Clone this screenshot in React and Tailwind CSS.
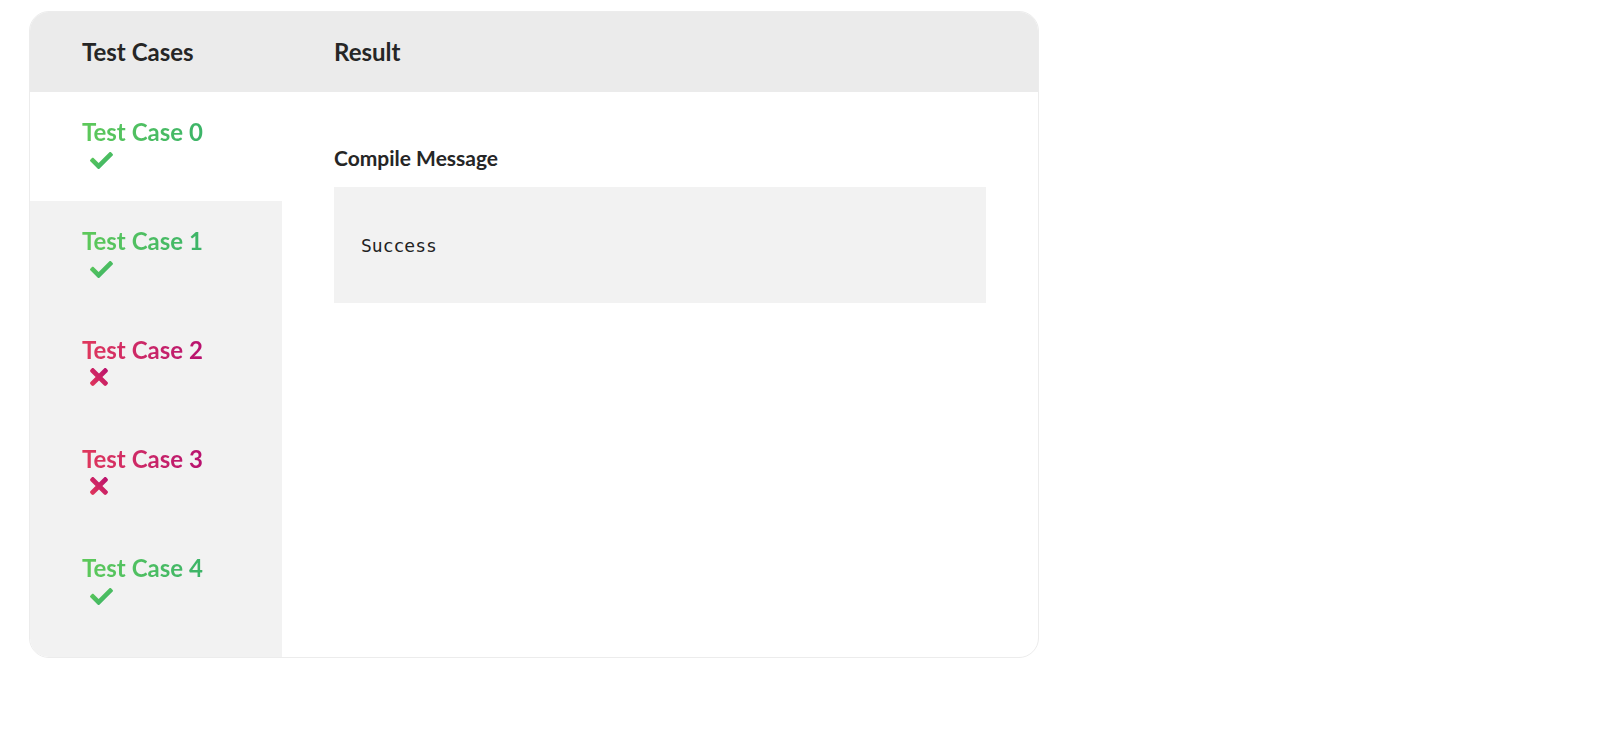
import React, { useState } from 'react';

const testCases = [
    { id: 0, passed: true },
    { id: 1, passed: true },
    { id: 2, passed: false },
    { id: 3, passed: false },
    { id: 4, passed: true },
];

const CheckIcon = ({ id }) => (
    <svg width="23" height="23" viewBox="0 0 512 512">
        <defs>
            <linearGradient id={`ok-${id}`} x1="0" y1="0" x2="1" y2="1">
                <stop offset="0%" stopColor="#62cb57" />
                <stop offset="100%" stopColor="#36b06a" />
            </linearGradient>
        </defs>
        <path
            fill={`url(#ok-${id})`}
            d="M173.898 439.404l-166.4-166.4c-9.997-9.997-9.997-26.206 0-36.204l36.203-36.204c9.997-9.998 26.207-9.998 36.204 0L192 312.69 432.095 72.596c9.997-9.997 26.207-9.997 36.204 0l36.203 36.204c9.997 9.997 9.997 26.206 0 36.204l-294.4 294.401c-9.998 9.997-26.207 9.997-36.204-.001z"
        />
    </svg>
);

const CrossIcon = ({ id }) => (
    <svg width="18" height="26" viewBox="0 0 352 512">
        <defs>
            <linearGradient id={`fail-${id}`} x1="0" y1="1" x2="1" y2="0">
                <stop offset="0%" stopColor="#e2385a" />
                <stop offset="100%" stopColor="#b8106f" />
            </linearGradient>
        </defs>
        <path
            fill={`url(#fail-${id})`}
            d="M242.72 256l100.07-100.07c12.28-12.28 12.28-32.19 0-44.48l-22.24-22.24c-12.28-12.28-32.19-12.28-44.48 0L176 189.28 75.93 89.21c-12.28-12.28-32.19-12.28-44.48 0L9.21 111.45c-12.28 12.280-12.28 32.19 0 44.48L109.28 256 9.21 356.07c-12.28 12.28-12.28 32.19 0 44.48l22.24 22.24c12.28 12.28 32.2 12.28 44.48 0L176 322.72l100.07 100.07c12.28 12.28 32.2 12.28 44.48 0l22.24-22.24c12.28-12.28 12.28-32.19 0-44.48L242.72 256z"
        />
    </svg>
);

const App = () => {
    const [active, setActive] = useState(0);

    return (
        <div className="pl-[29px] pt-[11px] font-['Lato',sans-serif]">
            <div className="w-[1010px] rounded-[20px] border border-[#ececec] overflow-hidden bg-white">
                {/* Header */}
                <div className="flex items-center h-[80px] bg-[#ebebeb] text-[24px] font-bold text-[#262626]">
                    <div className="w-[252px] pl-[52px]">Test Cases</div>
                    <div className="pl-[52px]">Result</div>
                </div>

                <div className="flex">
                    {/* Test case list */}
                    <div className="w-[252px] bg-[#f2f2f2] pb-[20px]">
                        {testCases.map((tc) => (
                            <div
                                key={tc.id}
                                onClick={() => setActive(tc.id)}
                                className={`h-[109px] pl-[52px] pt-[24px] cursor-pointer ${active === tc.id ? 'bg-white' : ''}`}
                            >
                                <p
                                    className={`inline-block text-[24px] leading-[32px] font-bold bg-clip-text text-transparent bg-gradient-to-r ${tc.passed
                                        ? 'from-[#5ec95a] to-[#3cb468]'
                                        : 'from-[#e0385c] to-[#b8106f]'
                                        }`}
                                >
                                    Test Case {tc.id}
                                </p>
                                <div className={`ml-[8px] ${tc.passed ? 'mt-[1px]' : 'mt-[-2px]'}`}>
                                    {tc.passed ? <CheckIcon id={tc.id} /> : <CrossIcon id={tc.id} />}
                                </div>
                            </div>
                        ))}
                    </div>

                    {/* Result */}
                    <div className="flex-1 px-[52px] pt-[52px]">
                        <h3 className="text-[21px] leading-[28px] font-bold text-[#262626] mb-[15px]">
                            Compile Message
                        </h3>
                        <div className="h-[116px] bg-[#f2f2f2] flex items-center pl-[27px]">
                            <pre className="font-['DejaVu_Sans_Mono',monospace] text-[18px] text-[#222]">Success</pre>
                        </div>
                    </div>
                </div>
            </div>
        </div>
    );
};

export default App;
